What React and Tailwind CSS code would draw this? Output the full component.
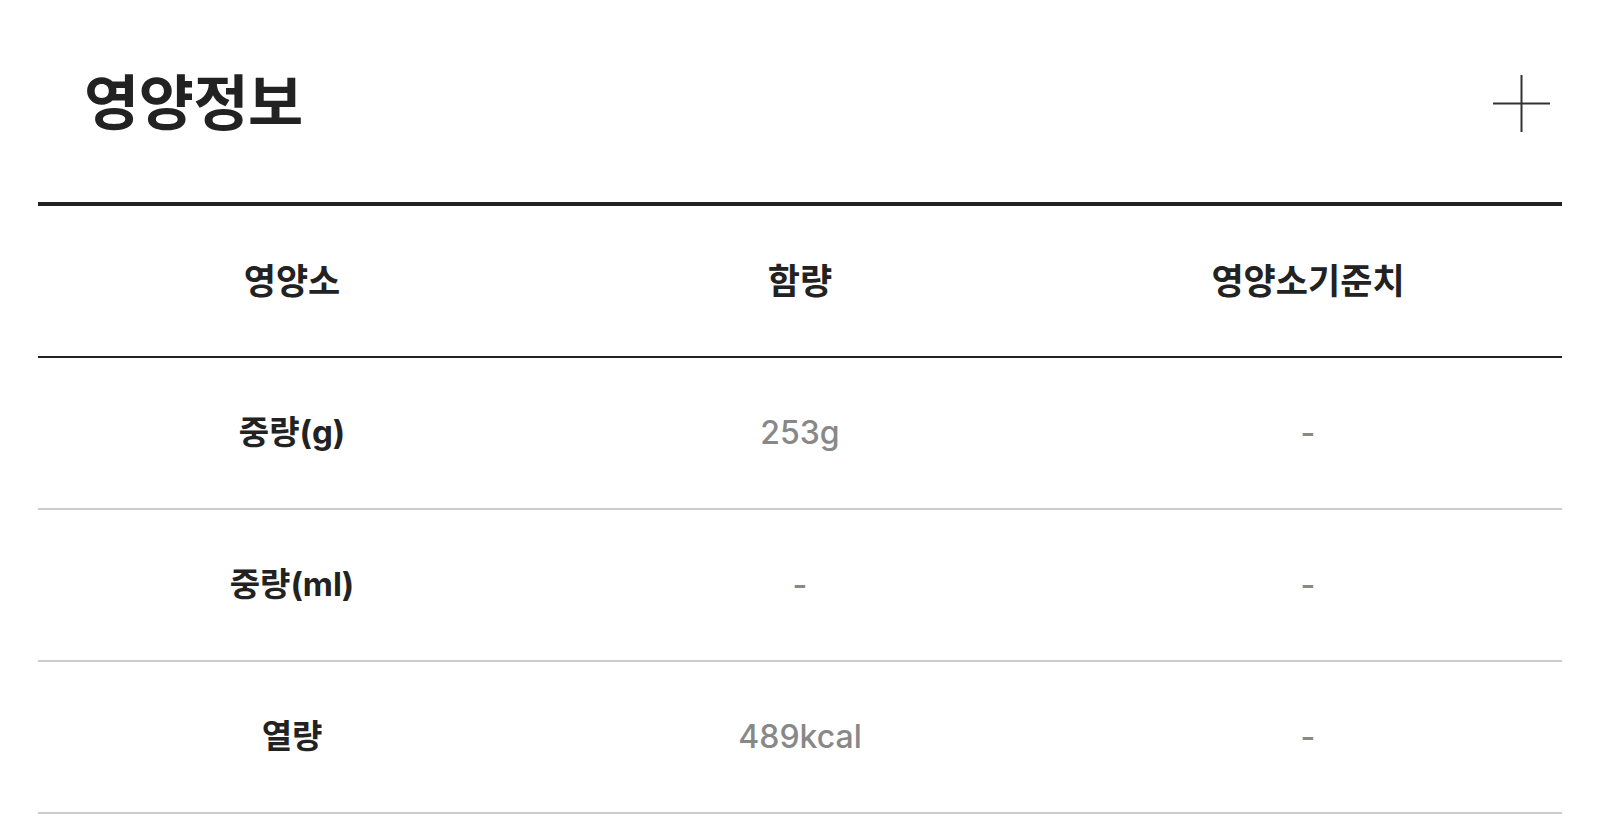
const rows = [
  { name: "중량(g)", amount: "253g", daily: "-" },
  { name: "중량(ml)", amount: "-", daily: "-" },
  { name: "열량", amount: "489kcal", daily: "-" },
];

function PlusIcon() {
  return (
    <svg width="57" height="57" viewBox="0 0 57 57" aria-hidden="true">
      <path d="M28.5 0V57M0 28.5H57" stroke="#333" strokeWidth="2" />
    </svg>
  );
}

export default function App() {
  return (
    <div className="min-h-screen bg-white px-[38px] font-['Inter','Noto_Sans_CJK_KR',sans-serif] text-[#222]">
      <div className="flex h-[202px] items-center justify-between pl-[46px] pr-[12px] pt-[4px]">
        <h2 className="text-[60px] font-bold leading-none tracking-[-0.5px]">
          영양정보
        </h2>
        <PlusIcon />
      </div>

      <div className="border-t-4 border-[#222]">
        <div className="grid h-[152px] grid-cols-3 items-center border-b-2 border-[#222] text-center text-[35px] font-semibold">
          <span>영양소</span>
          <span>함량</span>
          <span>영양소기준치</span>
        </div>
        {rows.map((row) => (
          <div
            key={row.name}
            className="grid h-[152px] grid-cols-3 items-center border-b-2 border-[#ccc] text-center text-[32px]"
          >
            <span className="text-[33px] font-bold">{row.name}</span>
            <span className="font-medium text-[#888]">{row.amount}</span>
            <span className="font-medium text-[#888]">{row.daily}</span>
          </div>
        ))}
      </div>
    </div>
  );
}
